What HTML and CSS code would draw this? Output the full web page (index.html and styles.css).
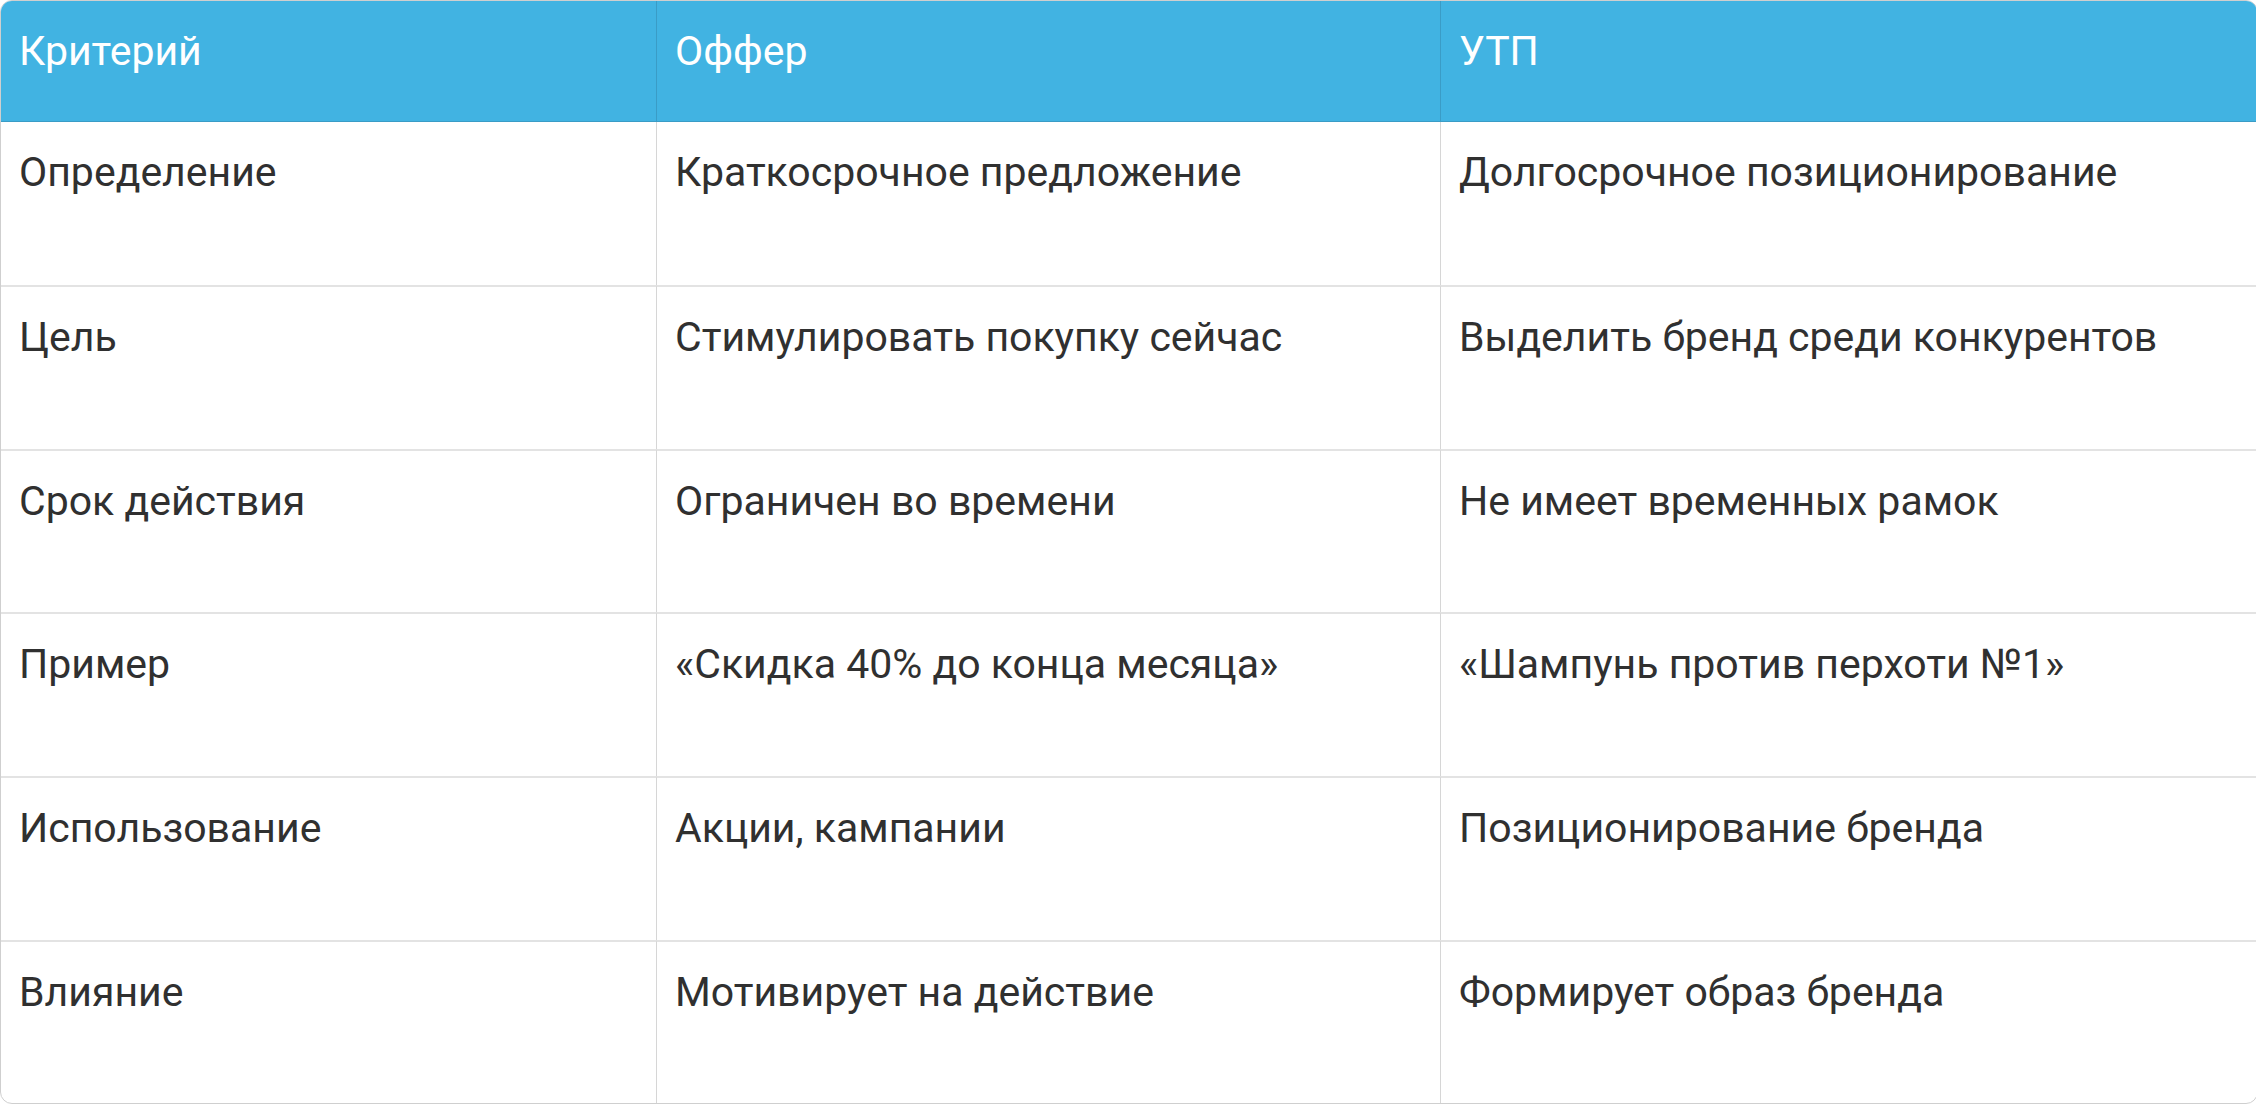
FILE: index.html
```html
<!DOCTYPE html>
<html lang="ru">
<head>
<meta charset="utf-8">
<title>Оффер и УТП</title>
<link rel="stylesheet" href="styles.css">
</head>
<body>
<div class="wrap">
<table class="cmp">
  <colgroup>
    <col class="c1"><col class="c2"><col class="c3">
  </colgroup>
  <thead>
    <tr><th>Критерий</th><th>Оффер</th><th>УТП</th></tr>
  </thead>
  <tbody>
    <tr><td>Определение</td><td>Краткосрочное предложение</td><td>Долгосрочное позиционирование</td></tr>
    <tr><td>Цель</td><td>Стимулировать покупку сейчас</td><td>Выделить бренд среди конкурентов</td></tr>
    <tr><td>Срок действия</td><td>Ограничен во времени</td><td>Не имеет временных рамок</td></tr>
    <tr><td>Пример</td><td>«Скидка 40% до конца месяца»</td><td>«Шампунь против перхоти №1»</td></tr>
    <tr><td>Использование</td><td>Акции, кампании</td><td>Позиционирование бренда</td></tr>
    <tr><td>Влияние</td><td>Мотивирует на действие</td><td>Формирует образ бренда</td></tr>
  </tbody>
</table>
</div>
</body>
</html>
```
FILE: styles.css
```css
html, body {
  margin: 0;
  padding: 0;
  background: #ffffff;
}
.wrap {
  width: 2256px;
  height: 1104px;
}
.cmp {
  width: 2256px;
  table-layout: fixed;
  border-collapse: separate;
  border-spacing: 0;
  border: 1px solid #cfcfcf;
  border-radius: 12px;
  overflow: hidden;
  font-family: Roboto, "Liberation Sans", sans-serif;
  font-size: 41px;
  line-height: 60px;
  color: #303030;
}
.c1 { width: 655px; }
.c2 { width: 784px; }
.c3 { width: 817px; }
.cmp th, .cmp td {
  text-align: left;
  vertical-align: top;
  padding: 20px 18px;
  font-weight: 400;
}
.cmp th {
  background: #41b3e2;
  color: #ffffff;
  height: 80px;
  border-bottom: 1px solid #3a9cc6;
}
.cmp th + th {
  border-left: 1px solid #3a9cc6;
}
.cmp td {
  height: 121.7px;
  border-top: 2px solid #e3e3e3;
}
.cmp tbody tr:first-child td {
  border-top: none;
  height: 123px;
}
.cmp td + td {
  border-left: 1px solid #d6d6d6;
}
```
